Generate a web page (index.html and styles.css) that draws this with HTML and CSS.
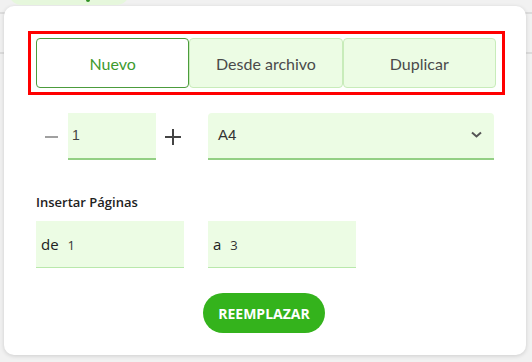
FILE: index.html
```html
<!DOCTYPE html>
<html lang="es">
<head>
    <meta charset="UTF-8">
    <meta name="viewport" content="width=device-width, initial-scale=1.0">
    <title>Insertar páginas</title>
    <link rel="stylesheet" href="styles.css">
</head>
<body>

<div class="tab-pill"><span class="tab-dot"></span></div>

<div class="card">
    <div class="mode-frame">
        <div class="mode-group">
            <button class="mode-btn active">Nuevo</button>
            <button class="mode-btn">Desde archivo</button>
            <button class="mode-btn">Duplicar</button>
        </div>
    </div>

    <div class="count-row">
        <button class="step-btn minus">
            <svg width="13" height="14" viewBox="0 0 13 14"><path d="M0 7h13" stroke="#a0a0a0" stroke-width="2"/></svg>
        </button>
        <div class="count-field">1</div>
        <button class="step-btn plus">
            <svg width="16" height="16" viewBox="0 0 16 16"><path d="M0 8h16M8 0v16" stroke="#444" stroke-width="2"/></svg>
        </button>
        <div class="size-select">
            <span>A4</span>
            <svg width="11" height="7" viewBox="0 0 11 7"><path d="M1 1.5l4.5 4 4.5-4" fill="none" stroke="#555" stroke-width="2"/></svg>
        </div>
    </div>

    <h4 class="section-title">Insertar Páginas</h4>
    <div class="range-row">
        <div class="range-field"><span class="range-label">de</span><span class="range-value">1</span></div>
        <div class="range-field"><span class="range-label">a</span><span class="range-value">3</span></div>
    </div>

    <div class="actions">
        <button class="replace-btn">REEMPLAZAR</button>
    </div>
</div>

</body>
</html>
```

FILE: styles.css
```css
body {
    margin: 0;
    height: 362px;
    overflow: hidden;
    font-family: Lato, "Open Sans", sans-serif;
    background-color: #f1f1f1;
    background-image:
        linear-gradient(#dcdcdc, #dcdcdc),
        linear-gradient(#dcdcdc, #dcdcdc);
    background-size: 100% 2px, 100% 2px;
    background-position: 0 12px, 0 52px;
    background-repeat: no-repeat;
}
.tab-pill {
    position: relative;
    width: 122px;
    height: 24px;
    margin: -19px 0 0 8px;
    border-radius: 0 0 14px 14px;
    background-color: #e6f7dc;
}
.tab-dot {
    position: absolute;
    left: 78px;
    bottom: 3px;
    width: 4px;
    height: 4px;
    border-radius: 50%;
    background-color: #2e8f22;
}
.card {
    box-sizing: border-box;
    width: 522px;
    height: 349px;
    margin: 1px 0 0 4px;
    padding: 25px 21px 0 24px;
    background-color: white;
    border-radius: 10px;
    box-shadow: 0 1px 4px rgba(0, 0, 0, 0.15);
}
.mode-frame {
    border: 3px solid #ff0000;
    padding: 4px 6px 4px 5px;
}
.mode-group {
    display: flex;
}
.mode-btn {
    flex: 1;
    height: 50px;
    margin: 0;
    font-family: Lato, sans-serif;
    font-size: 16px;
    color: #4a4a4a;
    background-color: #ecfce4;
    border: 1px solid #c8ecba;
    border-radius: 4px;
    cursor: pointer;
}
.mode-btn.active {
    color: #3d9a2e;
    background-color: white;
    border-color: #4c9c3c;
}
.count-row {
    display: flex;
    align-items: center;
    margin-top: 18px;
    padding-left: 17px;
}
.step-btn {
    display: flex;
    align-items: center;
    justify-content: center;
    padding: 0;
    background: none;
    border: none;
    cursor: pointer;
}
.step-btn.minus {
    width: 13px;
    margin-right: 10px;
}
.step-btn.plus {
    width: 16px;
    margin: 0 27px 0 9px;
}
.count-field {
    box-sizing: border-box;
    width: 88px;
    height: 47px;
    padding: 14px 4px 0;
    font-family: "Liberation Sans", Arial, sans-serif;
    font-size: 14px;
    color: #444;
    background-color: #ecfce4;
    border-bottom: 2px solid #93cf84;
}
.size-select {
    box-sizing: border-box;
    display: flex;
    align-items: center;
    justify-content: space-between;
    width: 286px;
    height: 47px;
    padding: 0 12px 2px 10px;
    font-family: "Liberation Sans", Arial, sans-serif;
    font-size: 15px;
    color: #333;
    background-color: #ecfce4;
    border-bottom: 2px solid #93cf84;
    border-radius: 4px 4px 0 0;
}
.section-title {
    margin: 33px 0 0 8px;
    font-family: "Open Sans", sans-serif;
    font-size: 13px;
    font-weight: 600;
    color: #222;
}
.range-row {
    display: flex;
    gap: 24px;
    margin: 10px 0 0 8px;
}
.range-field {
    box-sizing: border-box;
    width: 148px;
    height: 47px;
    padding: 13px 5px 0;
    background-color: #ecfce4;
    border-bottom: 1px solid #b9e8ab;
}
.range-label {
    font-family: "Open Sans", sans-serif;
    font-size: 15px;
    color: #222;
    margin-right: 9px;
}
.range-value {
    font-family: "Open Sans", sans-serif;
    font-size: 13px;
    color: #333;
}
.actions {
    display: flex;
    justify-content: center;
    margin-top: 25px;
}
.replace-btn {
    width: 122px;
    height: 40px;
    margin-right: 5px;
    font-family: "Open Sans", sans-serif;
    font-size: 14px;
    font-weight: 700;
    color: white;
    background-color: #34b31c;
    border: none;
    border-radius: 20px;
    cursor: pointer;
}
```
